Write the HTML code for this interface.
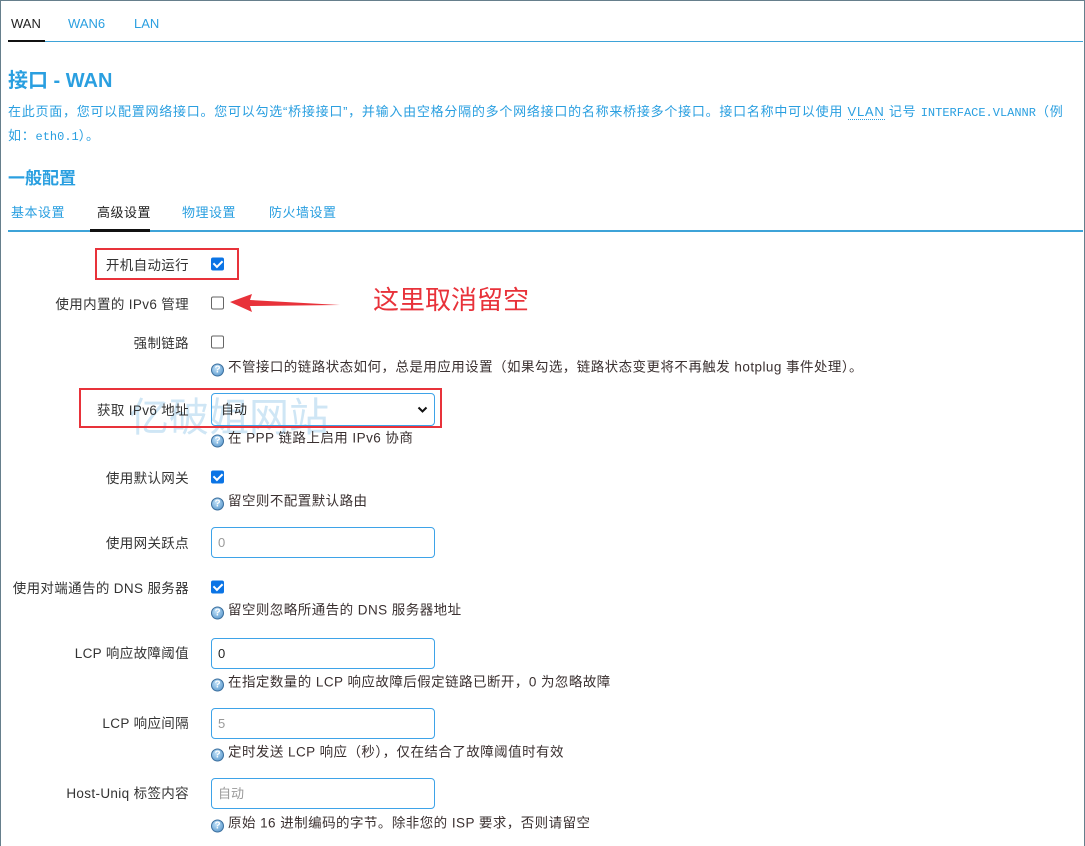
<!DOCTYPE html>
<html><head><meta charset="utf-8"><style>
*{box-sizing:border-box;margin:0;padding:0}
body{width:1085px;height:846px;overflow:hidden;background:#fff;font-family:"Liberation Sans","Noto Sans CJK SC",sans-serif;font-size:13px;color:#333;position:relative;border:1px solid #667f8c;border-bottom:none}
.a{position:absolute;white-space:nowrap}
.blue{color:#2a9fe0}
.lbl{position:absolute;right:895px;white-space:nowrap;font-size:13.5px;letter-spacing:0.35px;color:#333;transform:translateY(-50%)}
.cb{position:absolute;left:210px;width:13px;height:13px;border-radius:2px;transform:translateY(-50%)}
.cb.on{background:#0b74e5}
.cb.on:after{content:"";position:absolute;left:4px;top:1px;width:4px;height:7px;border:solid #fff;border-width:0 2px 2px 0;transform:rotate(45deg)}
.cb.off{border:1px solid #666;background:#fff}
.help{position:absolute;left:210px;white-space:nowrap;font-size:13.5px;letter-spacing:0.45px;color:#3a3030;transform:translateY(-50%)}
.q{display:inline-block;width:13px;height:13px;border-radius:50%;background:radial-gradient(circle at 40% 35%,#bfe0f8,#4d8fc7);color:#fff;font-size:10px;font-weight:bold;text-align:center;line-height:11px;vertical-align:-1px;margin-right:4px;border:1px solid #3b6f9e;letter-spacing:0}
.inp{position:absolute;left:210px;width:224px;height:31px;border:1px solid #3ea3e8;border-radius:4px;padding-left:6px;line-height:29px;font-size:13px}
.red{position:absolute;border:2px solid #e8323a}
.sub{letter-spacing:0.5px}
</style></head><body>
<div class="a" style="left:10px;top:15px;color:#222">WAN</div>
<div class="a blue" style="left:67px;top:15px">WAN6</div>
<div class="a blue" style="left:133px;top:15px">LAN</div>
<div class="a" style="left:7px;top:40px;width:1075px;height:1px;background:#3ea3d8"></div>
<div class="a" style="left:7px;top:39px;width:37px;height:2px;background:#111"></div>

<div class="a blue" style="left:7px;top:63px;font-size:20px;font-weight:bold">接口 - WAN</div>
<div class="a blue" style="left:7px;top:100px;font-size:13px;letter-spacing:0.75px">在此页面，您可以配置网络接口。您可以勾选“桥接接口”，并输入由空格分隔的多个网络接口的名称来桥接多个接口。接口名称中可以使用 <span style="border-bottom:1px dotted #2a9fe0">VLAN</span> 记号 <span style="font-family:'Liberation Mono',monospace;font-size:12px;letter-spacing:0">INTERFACE.VLANNR</span>（例</div>
<div class="a blue" style="left:7px;top:124px;font-size:13px;letter-spacing:0.75px">如：<span style="font-family:'Liberation Mono',monospace;font-size:12px;letter-spacing:0">eth0.1</span>）。</div>
<div class="a blue" style="left:7px;top:163px;font-size:17px;font-weight:bold">一般配置</div>
<div class="a blue sub" style="left:10px;top:201px">基本设置</div>
<div class="a sub" style="left:96px;top:201px;color:#222">高级设置</div>
<div class="a blue sub" style="left:181px;top:201px">物理设置</div>
<div class="a blue sub" style="left:268px;top:201px">防火墙设置</div>
<div class="a" style="left:7px;top:229px;width:1075px;height:2px;background:#3ea3d8"></div>
<div class="a" style="left:89px;top:228px;width:60px;height:3px;background:#111"></div>

<div class="a" style="left:128px;top:384px;font-size:40px;color:#cfe6f5;font-family:'Noto Sans CJK SC',sans-serif">亿破姐网站</div>

<div class="red" style="left:94px;top:247px;width:144px;height:32px"></div>
<div class="lbl" style="top:263px">开机自动运行</div><div class="cb on" style="top:263px"></div>

<div class="lbl" style="top:302px">使用内置的 IPv6 管理</div><div class="cb off" style="top:302px"></div>
<svg class="a" style="left:227px;top:291px" width="115" height="22"><polygon points="2,10 24,2 22,8 112,13 22,14 24,20" fill="#e8323a"/></svg>
<div class="a" style="left:372px;top:279px;font-size:26px;color:#e8323a;font-family:'Noto Sans CJK SC',sans-serif">这里取消留空</div>

<div class="lbl" style="top:341px">强制链路</div><div class="cb off" style="top:341px"></div>
<div class="help" style="top:365px"><span class="q">?</span>不管接口的链路状态如何，总是用应用设置（如果勾选，链路状态变更将不再触发 hotplug 事件处理）。</div>

<div class="red" style="left:78px;top:387px;width:363px;height:40px"></div>
<div class="lbl" style="top:408px">获取 IPv6 地址</div>
<div class="inp" style="top:392px;height:33px;line-height:31px;padding-left:9px;color:#222">自动<svg style="position:absolute;right:6px;top:12px" width="11" height="8"><path d="M1.5 1.5 L5.5 5.5 L9.5 1.5" stroke="#111" stroke-width="2" fill="none"/></svg></div>
<div class="help" style="top:436px"><span class="q">?</span>在 PPP 链路上启用 IPv6 协商</div>

<div class="lbl" style="top:476px">使用默认网关</div><div class="cb on" style="top:476px"></div>
<div class="help" style="top:499px"><span class="q">?</span>留空则不配置默认路由</div>

<div class="lbl" style="top:541px">使用网关跃点</div>
<div class="inp" style="top:526px;color:#999">0</div>

<div class="lbl" style="top:586px">使用对端通告的 DNS 服务器</div><div class="cb on" style="top:586px"></div>
<div class="help" style="top:608px"><span class="q">?</span>留空则忽略所通告的 DNS 服务器地址</div>

<div class="lbl" style="top:651px">LCP 响应故障阈值</div>
<div class="inp" style="top:637px;color:#222">0</div>
<div class="help" style="top:680px"><span class="q">?</span>在指定数量的 LCP 响应故障后假定链路已断开，0 为忽略故障</div>

<div class="lbl" style="top:721px">LCP 响应间隔</div>
<div class="inp" style="top:707px;color:#999">5</div>
<div class="help" style="top:750px"><span class="q">?</span>定时发送 LCP 响应（秒），仅在结合了故障阈值时有效</div>

<div class="lbl" style="top:791px">Host-Uniq 标签内容</div>
<div class="inp" style="top:777px;color:#999">自动</div>
<div class="help" style="top:821px"><span class="q">?</span>原始 16 进制编码的字节。除非您的 ISP 要求，否则请留空</div>
</body></html>
